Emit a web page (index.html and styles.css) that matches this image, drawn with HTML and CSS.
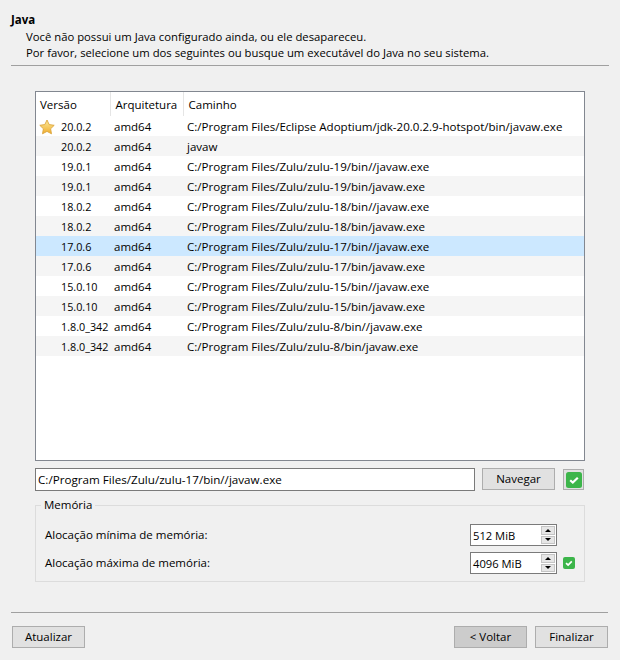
FILE: index.html
```html
<!DOCTYPE html>
<html>
<head>
<meta charset="utf-8">
<title>Java</title>
<link rel="stylesheet" href="styles.css">
</head>
<body>
<div class="wizard">
	<div class="head">
		<h1>Java</h1>
		<p>Você não possui um Java configurado ainda, ou ele desapareceu.</p>
		<p>Por favor, selecione um dos seguintes ou busque um executável do Java no seu sistema.</p>
	</div>
	<div class="main">
		<div class="table-wrap">
			<table>
				<thead>
					<tr><th class="c-ver">Versão</th><th class="c-arch">Arquitetura</th><th>Caminho</th></tr>
				</thead>
				<tbody>
					<tr><td class="ver"><svg class="star" viewBox="0 0 16 16"><defs><linearGradient id="gold" x1="0" y1="0" x2="0" y2="1"><stop offset="0" stop-color="#fdeb9c"/><stop offset="1" stop-color="#efac2c"/></linearGradient></defs><path d="M8 1l2.200 4.600 5 .7-3.600 3.500.9 5L8 12.400l-4.500 2.400.9-5L.8 6.300l5-.7z" fill="url(#gold)" stroke="#dba63f" stroke-width=".9" stroke-linejoin="round"/></svg>20.0.2</td><td>amd64</td><td class="path-cell">C:/Program Files/Eclipse Adoptium/jdk-20.0.2.9-hotspot/bin/javaw.exe</td></tr>
					<tr><td class="ver">20.0.2</td><td>amd64</td><td class="path-cell">javaw</td></tr>
					<tr><td class="ver">19.0.1</td><td>amd64</td><td class="path-cell">C:/Program Files/Zulu/zulu-19/bin//javaw.exe</td></tr>
					<tr><td class="ver">19.0.1</td><td>amd64</td><td class="path-cell">C:/Program Files/Zulu/zulu-19/bin/javaw.exe</td></tr>
					<tr><td class="ver">18.0.2</td><td>amd64</td><td class="path-cell">C:/Program Files/Zulu/zulu-18/bin//javaw.exe</td></tr>
					<tr><td class="ver">18.0.2</td><td>amd64</td><td class="path-cell">C:/Program Files/Zulu/zulu-18/bin/javaw.exe</td></tr>
					<tr class="sel"><td class="ver">17.0.6</td><td>amd64</td><td class="path-cell">C:/Program Files/Zulu/zulu-17/bin//javaw.exe</td></tr>
					<tr><td class="ver">17.0.6</td><td>amd64</td><td class="path-cell">C:/Program Files/Zulu/zulu-17/bin/javaw.exe</td></tr>
					<tr><td class="ver">15.0.10</td><td>amd64</td><td class="path-cell">C:/Program Files/Zulu/zulu-15/bin//javaw.exe</td></tr>
					<tr><td class="ver">15.0.10</td><td>amd64</td><td class="path-cell">C:/Program Files/Zulu/zulu-15/bin/javaw.exe</td></tr>
					<tr><td class="ver">1.8.0_342</td><td>amd64</td><td class="path-cell">C:/Program Files/Zulu/zulu-8/bin//javaw.exe</td></tr>
					<tr><td class="ver">1.8.0_342</td><td>amd64</td><td class="path-cell">C:/Program Files/Zulu/zulu-8/bin/javaw.exe</td></tr>
				</tbody>
			</table>
		</div>
		<div class="path-row">
			<div class="field path">C:/Program Files/Zulu/zulu-17/bin//javaw.exe</div>
			<div class="btn nav">Navegar</div>
			<div class="check-box"><svg class="check" viewBox="0 0 16 16"><rect width="16" height="16" rx="2.500" fill="#3cb54a"/><path d="M4.200 8.200l2.600 2.400 5-4.800" fill="none" stroke="#fff" stroke-width="2.200"/></svg></div>
		</div>
		<div class="group">
			<span class="legend">Memória</span>
			<div class="mem-row">
				<span class="mem-label">Alocação mínima de memória:</span>
				<div class="field spin"><span class="spin-val">512 MiB</span><span class="arrows"><i class="up"></i><i class="down"></i></span></div>
				<span class="mem-gap"></span>
			</div>
			<div class="mem-row">
				<span class="mem-label">Alocação máxima de memória:</span>
				<div class="field spin"><span class="spin-val">4096 MiB</span><span class="arrows"><i class="up"></i><i class="down"></i></span></div>
				<span class="mem-gap"><svg class="check small" viewBox="0 0 12 12"><rect width="12" height="12" rx="2" fill="#3cb54a"/><path d="M3 6.200l2.100 1.800 3.700-3.600" fill="none" stroke="#fff" stroke-width="1.700"/></svg></span>
			</div>
		</div>
	</div>
	<div class="foot">
		<div class="btn">Atualizar</div>
		<div class="foot-right">
			<div class="btn back">&lt; Voltar</div>
			<div class="btn">Finalizar</div>
		</div>
	</div>
</div>
</body>
</html>
```

FILE: styles.css
```css
* { margin: 0; padding: 0; box-sizing: border-box; }
body{
	background: #f0f0f0;
	color: #000;
	font: 12px/16px "Open Sans", "Noto Sans", sans-serif;
}
.wizard{
	display: flex;
	flex-direction: column;
	width: 620px;
	height: 660px;
	overflow: hidden;
}

.head{
	height: 66px;
	margin: 0 11px 0 11px;
	padding: 12px 0 0 0;
	border-bottom: 1px solid #a0a0a0;
}
.head h1{
	font-size: 11.5px;
	font-weight: 700;
	line-height: 16px;
}
.head p{
	font-size: 11.300px;
	padding-left: 15px;
}
.head h1 + p{
	padding-top: 1px;
}

.main{
	flex: 1;
	padding: 25px 35px 0 35px;
}
.table-wrap{
	height: 370px;
	background: #fff;
	border: 1px solid #828790;
}
table{
	width: 100%;
	border-collapse: collapse;
	table-layout: fixed;
	font-size: 11.500px;
}
th{
	height: 24px;
	padding: 1px 0 0 5px;
	font-weight: 400;
	text-align: left;
	border-right: 1px solid #e5e5e5;
}
th:first-child{
	padding-left: 4px;
}
th:last-child{
	border-right: 0;
}
.c-ver{ width: 74px; }
.c-arch{ width: 73px; }
td{
	height: 20px;
	padding: 1px 0 0 4px;
	white-space: nowrap;
}
td.path-cell{
	font-size: 11.570px;
}
tbody tr:nth-child(even) td{
	background: #f5f5f5;
}
tbody tr.sel td{
	background: #cce8ff;
}
td.ver{
	position: relative;
	padding-left: 25px;
	font-size: 10.800px;
}
.star{
	position: absolute;
	left: 3px;
	top: 3px;
	width: 16px;
	height: 16px;
}

.path-row{
	display: flex;
	align-items: flex-start;
	margin-top: 7px;
}
.field{
	height: 23px;
	background: #fff;
	border: 1px solid #7a7a7a;
	line-height: 21px;
	font-size: 11.500px;
}
.path{
	width: 440px;
	padding-left: 2px;
	font-size: 11.650px;
}
.btn{
	width: 73px;
	height: 22px;
	background: #e1e1e1;
	border: 1px solid #adadad;
	line-height: 20px;
	font-size: 11.500px;
	text-align: center;
}
.nav{
	margin-left: 7px;
}
.check-box{
	display: flex;
	align-items: center;
	justify-content: center;
	width: 21px;
	height: 21px;
	margin: 1px 0 0 8px;
	background: #e1e1e1;
	border: 1px solid #adadad;
}
.check{
	display: block;
	width: 16px;
	height: 16px;
}
.check.small{
	width: 12px;
	height: 12px;
}

.group{
	position: relative;
	height: 77px;
	margin-top: 14px;
	padding: 18px 0 0 9px;
	border: 1px solid #dcdcdc;
}
.legend{
	position: absolute;
	left: 5px;
	top: -9px;
	padding: 0 3px;
	background: #f0f0f0;
	font-size: 11.500px;
}
.mem-row{
	display: flex;
	align-items: center;
	height: 22px;
	margin-bottom: 6px;
	font-size: 11.500px;
}
.mem-label{
	width: 425px;
}
.spin{
	display: flex;
	align-items: center;
	justify-content: space-between;
	width: 87px;
	height: 22px;
	padding-left: 1px;
	font-size: 11.200px;
}
.spin-val{
	padding-left: 1px;
}
.arrows{
	display: flex;
	flex-direction: column;
	gap: 1px;
	width: 14px;
	margin-right: 1px;
}
.arrows i{
	display: flex;
	align-items: center;
	justify-content: center;
	height: 8.500px;
	background: #e6e6e6;
	border: 1px solid #c4c4c4;
}
.arrows i::after{
	content: "";
	border-left: 3px solid transparent;
	border-right: 3px solid transparent;
}
.up::after{ border-bottom: 3px solid #000; }
.down::after{ border-top: 3px solid #000; }
.mem-gap{
	width: 12px;
	margin-left: 6px;
}

.foot{
	display: flex;
	justify-content: space-between;
	height: 48px;
	margin: 0 12px 0 11px;
	padding: 13px 0 0 1px;
	border-top: 1px solid #a0a0a0;
}
.foot-right{
	display: flex;
	gap: 8px;
}
.back{
	background: #cccccc;
}
```
